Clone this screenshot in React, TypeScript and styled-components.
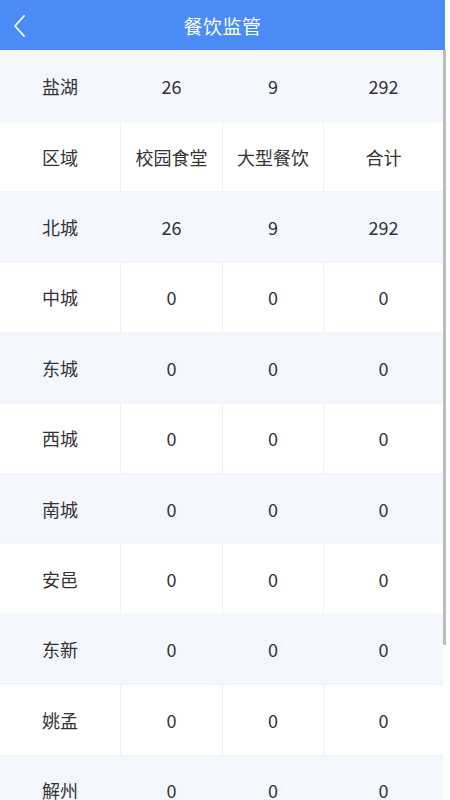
import styled, { createGlobalStyle } from "styled-components";

const GlobalStyle = createGlobalStyle`
  body {
    margin: 0;
    background: #ffffff;
    font-family: "Noto Sans CJK SC", "Noto Sans", sans-serif;
    color: #333333;
  }
`;

const Page = styled.div`
  position: relative;
  width: 450px;
  height: 800px;
  overflow: hidden;
  background: #ffffff;
`;

const Header = styled.header`
  position: relative;
  display: flex;
  align-items: center;
  justify-content: center;
  width: 445px;
  height: 50px;
  background: #4a8bf5;
  color: #ffffff;
  font-size: 19px;
  letter-spacing: 0.5px;
`;

const Back = styled.button`
  position: absolute;
  left: 8px;
  top: 12px;
  width: 24px;
  height: 28px;
  padding: 0;
  border: 0;
  background: none;
  display: flex;
  align-items: center;
  justify-content: center;
`;

const Table = styled.div`
  width: 443px;
`;

const Row = styled.div<{ $shade: boolean; $tall?: boolean }>`
  display: grid;
  grid-template-columns: 120px 102px 101px 120px;
  height: ${(p) => (p.$tall ? 72 : 70.4)}px;
  background: ${(p) => (p.$shade ? "#f4f7fd" : "#ffffff")};
  border-bottom: 1px solid ${(p) => (p.$shade ? "#f0f3f8" : "#f1f3f6")};
  box-sizing: border-box;
`;

const Cell = styled.div<{ $lined: boolean }>`
  display: flex;
  align-items: center;
  justify-content: center;
  font-size: 18px;
  color: #333333;
  border-left: 1px solid ${(p) => (p.$lined ? "#eef0f4" : "transparent")};
  &:first-child {
    border-left: 0;
  }
`;

const Scrollbar = styled.div`
  position: absolute;
  left: 443px;
  top: 50px;
  width: 3px;
  height: 595px;
  background: #bdbdbd;
`;

const rows: string[][] = [
  ["盐湖", "26", "9", "292"],
  ["区域", "校园食堂", "大型餐饮", "合计"],
  ["北城", "26", "9", "292"],
  ["中城", "0", "0", "0"],
  ["东城", "0", "0", "0"],
  ["西城", "0", "0", "0"],
  ["南城", "0", "0", "0"],
  ["安邑", "0", "0", "0"],
  ["东新", "0", "0", "0"],
  ["姚孟", "0", "0", "0"],
  ["解州", "0", "0", "0"],
];

function App() {
  return (
    <Page>
      <GlobalStyle />
      <Header>
        <Back aria-label="返回">
          <svg width="14" height="24" viewBox="0 0 14 24">
            <polyline
              points="11,2 2,12 11,22"
              fill="none"
              stroke="#ffffff"
              strokeWidth="1.8"
              strokeLinecap="round"
              strokeLinejoin="round"
            />
          </svg>
        </Back>
        餐饮监管
      </Header>
      <Table>
        {rows.map((r, i) => {
          const shade = i % 2 === 0;
          return (
            <Row key={i} $shade={shade} $tall={i === 0}>
              {r.map((c, j) => (
                <Cell key={j} $lined={!shade}>
                  {c}
                </Cell>
              ))}
            </Row>
          );
        })}
      </Table>
      <Scrollbar />
    </Page>
  );
}

export default App;
